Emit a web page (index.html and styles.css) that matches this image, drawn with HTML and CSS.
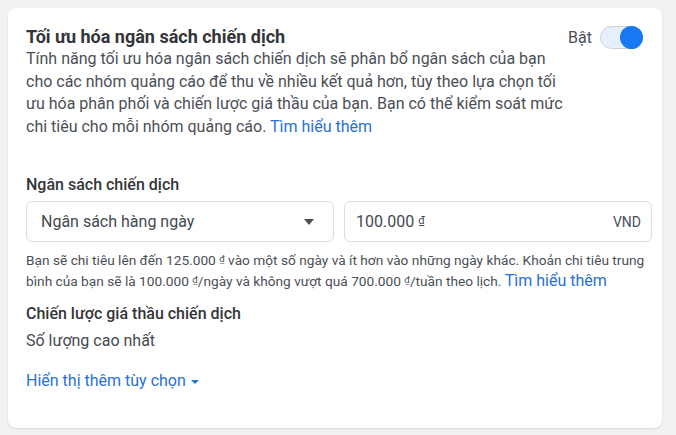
FILE: index.html
```html
<!DOCTYPE html>
<html lang="vi">

<head>
  <meta charset="UTF-8">
  <meta name="viewport" content="width=device-width, initial-scale=1.0">
  <title>Tối ưu hóa ngân sách chiến dịch</title>
  <link rel="stylesheet" href="styles.css">
</head>

<body>

  <div class="card">
    <div class="head">
      <div class="head-text">
        <h2 class="title">Tối ưu hóa ngân sách chiến dịch</h2>
        <p class="desc">Tính năng tối ưu hóa ngân sách chiến dịch sẽ phân bổ ngân sách của bạn cho các nhóm quảng cáo để thu về nhiều kết quả hơn, tùy theo lựa chọn tối ưu hóa phân phối và chiến lược giá thầu của bạn. Bạn có thể kiểm soát mức chi tiêu cho mỗi nhóm quảng cáo. <a href="#" class="link">Tìm hiểu thêm</a></p>
      </div>
      <div class="switch-wrap">
        <span class="switch-label">Bật</span>
        <span class="switch"><span class="knob"></span></span>
      </div>
    </div>

    <div class="label budget-label">Ngân sách chiến dịch</div>
    <div class="fields">
      <div class="field select">
        <span>Ngân sách hàng ngày</span>
        <span class="caret"></span>
      </div>
      <div class="field amount">
        <span>100.000 <span class="dong">₫</span></span>
        <span class="currency">VND</span>
      </div>
    </div>
    <p class="help">Bạn sẽ chi tiêu lên đến 125.000 <span class="dong">₫</span> vào một số ngày và ít hơn vào những ngày khác. Khoản chi tiêu trung bình của bạn sẽ là 100.000 <span class="dong">₫</span>/ngày và không vượt quá 700.000 <span class="dong">₫</span>/tuần theo lịch. <a href="#" class="link big">Tìm hiểu thêm</a></p>

    <div class="label bid-label">Chiến lược giá thầu chiến dịch</div>
    <div class="value">Số lượng cao nhất</div>

    <a href="#" class="more">Hiển thị thêm tùy chọn <span class="small-caret"></span></a>
  </div>

</body>

</html>
```

FILE: styles.css
```css
* {
  margin: 0;
  padding: 0;
  box-sizing: border-box;
}

body {
  background: #f2f2f2;
  padding: 8px;
  font-family: Roboto, "Liberation Sans", sans-serif;
  color: #444950;
}

.card {
  width: 654px;
  height: 420px;
  background: #ffffff;
  border-radius: 8px;
  box-shadow: 0 1px 2px rgba(0, 0, 0, 0.12);
  padding: 18px 10px 0 18px;
}

.head {
  display: flex;
  justify-content: space-between;
  align-items: flex-start;
}

.head-text {
  width: 540px;
}

.title {
  font-size: 18px;
  line-height: 22px;
  font-weight: 700;
  color: #333538;
}

.desc {
  font-size: 16px;
  line-height: 22.5px;
  color: #4b4f56;
}

.link {
  color: #2870d8;
  text-decoration: none;
}

.switch-wrap {
  display: flex;
  align-items: center;
  gap: 8px;
  margin-right: 9px;
}

.switch-label {
  font-size: 16px;
  color: #4b4f56;
}

.switch {
  width: 43px;
  height: 23px;
  border-radius: 12px;
  background: #e7effc;
  border: 1px solid #c9d3e0;
  display: flex;
  justify-content: flex-end;
  align-items: center;
}

.knob {
  width: 23px;
  height: 23px;
  margin-right: -1px;
  border-radius: 50%;
  background: #1877f2;
}

.label {
  font-size: 16px;
  line-height: 20px;
  font-weight: 500;
  color: #333538;
}

.budget-label {
  margin-top: 37px;
}

.fields {
  display: grid;
  grid-template-columns: 1fr 1fr;
  gap: 10px;
  margin-top: 6px;
}

.field {
  height: 41px;
  border: 1px solid #dadde1;
  border-radius: 6px;
  display: flex;
  align-items: center;
  justify-content: space-between;
  font-size: 16px;
  color: #444950;
}

.select {
  padding: 0 19px 0 14px;
}

.caret {
  width: 0;
  height: 0;
  border-left: 5px solid transparent;
  border-right: 5px solid transparent;
  border-top: 6px solid #4b4f56;
}

.amount {
  padding: 0 10px 0 11px;
}

.currency {
  font-size: 14px;
  color: #4b4f56;
}

.dong {
  font-size: 0.7em;
  line-height: 1;
  vertical-align: 0.3em;
  text-decoration: underline;
}

.help {
  margin-top: 8px;
  font-size: 13.7px;
  line-height: 21px;
  color: #4b4f56;
}

.help .dong {
  text-decoration: none;
}

.link.big {
  font-size: 16px;
  line-height: 1;
}

.bid-label {
  margin-top: 12px;
}

.value {
  margin-top: 7px;
  font-size: 16px;
  line-height: 20px;
  color: #444950;
}

.more {
  display: inline-flex;
  align-items: center;
  gap: 5px;
  margin-top: 20px;
  font-size: 16px;
  line-height: 20px;
  color: #2870d8;
  text-decoration: none;
}

.small-caret {
  width: 0;
  height: 0;
  border-left: 4px solid transparent;
  border-right: 4px solid transparent;
  border-top: 4px solid #2870d8;
  margin-top: 2px;
}
```
